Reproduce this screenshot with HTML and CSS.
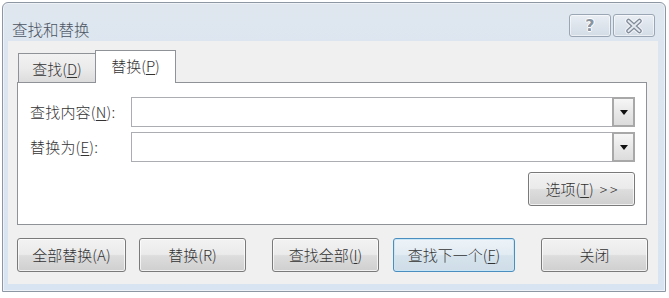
FILE: index.html
```html
<!DOCTYPE html>
<html lang="zh-CN">
<head>
<meta charset="utf-8">
<title>查找和替换</title>
<link rel="stylesheet" href="styles.css">
</head>
<body>
<div class="window">
  <div class="titlebar">
    <span class="title">查找和替换</span>
    <div class="caption-btns">
      <div class="cap-btn help"><span class="help-glyph">?</span></div>
      <div class="cap-btn close">
        <svg width="18" height="16" viewBox="0 0 18 16">
          <path d="M3.5 3 L14.5 13 M14.5 3 L3.5 13" stroke="#f4f6f8" stroke-width="6.5" stroke-linecap="round"/>
          <path d="M3.5 3 L14.5 13 M14.5 3 L3.5 13" stroke="#808b99" stroke-width="4.5" stroke-linecap="round"/>
          <path d="M3.5 3 L14.5 13 M14.5 3 L3.5 13" stroke="#e4e9ef" stroke-width="2" stroke-linecap="round"/>
        </svg>
      </div>
    </div>
  </div>
  <div class="client">
    <div class="tabs">
      <div class="tab">查找(<u>D</u>)</div>
      <div class="tab active">替换(<u>P</u>)</div>
    </div>
    <div class="panel">
      <div class="row">
        <span class="label">查找内容(<u>N</u>):</span>
        <div class="combo">
          <div class="combo-input"></div>
          <div class="combo-btn"><svg width="8" height="5" viewBox="0 0 8 5"><path d="M0 0 H8 L4 5 Z" fill="#111"/></svg></div>
        </div>
      </div>
      <div class="row">
        <span class="label">替换为(<u>E</u>):</span>
        <div class="combo">
          <div class="combo-input"></div>
          <div class="combo-btn"><svg width="8" height="5" viewBox="0 0 8 5"><path d="M0 0 H8 L4 5 Z" fill="#111"/></svg></div>
        </div>
      </div>
      <div class="options-row">
        <div class="btn options">选项(<u>T</u>)<span class="arrows">&gt;&gt;</span></div>
      </div>
    </div>
    <div class="actions">
      <div class="btn b-all">全部替换(A)</div>
      <div class="btn b-rep">替换(R)</div>
      <div class="btn b-findall">查找全部(<u>I</u>)</div>
      <div class="btn b-next focused">查找下一个(<u>F</u>)</div>
      <div class="btn b-close">关闭</div>
    </div>
  </div>
</div>
</body>
</html>
```

FILE: styles.css
```css
* { box-sizing: border-box; }

html, body {
  margin: 0;
  padding: 0;
  background: #ffffff;
}

body {
  font-family: "Noto Sans CJK SC", "Noto Sans", "Liberation Sans", sans-serif;
  font-weight: 300;
  color: #333333;
  width: 669px;
  height: 298px;
  overflow: hidden;
}

u { text-decoration: underline; text-underline-offset: 2px; text-decoration-thickness: 1px; }

.window {
  margin: 2px 0 0 2px;
  width: 664px;
  height: 290px;
  border: 1px solid #8d97a3;
  border-radius: 6px 6px 0 0;
  background: linear-gradient(#dfe6ee, #dde6f0 40px, #d8e4f1);
  box-shadow: inset 0 0 0 1px rgba(255,255,255,0.5);
}

.titlebar {
  height: 38px;
  display: flex;
  align-items: flex-start;
  justify-content: space-between;
}

.title {
  margin: 17px 0 0 9px;
  font-size: 15.5px;
  line-height: 18px;
  color: #4b5462;
}

.caption-btns {
  display: flex;
  gap: 2px;
  margin: 11px 10px 0 0;
}

.cap-btn {
  width: 42px;
  height: 23px;
  border: 1px solid #9aa6b3;
  border-radius: 3px;
  background: linear-gradient(#e9eef4, #dde4ec 50%, #d3dce6);
  box-shadow: inset 0 0 0 1px rgba(255,255,255,0.55);
  display: flex;
  align-items: center;
  justify-content: center;
}

.help-glyph {
  font-family: "DejaVu Sans", sans-serif;
  font-weight: bold;
  font-size: 16px;
  line-height: 16px;
  color: #8994a1;
  text-shadow: 1px 0 #fff, -1px 0 #fff, 0 1px #fff, 0 -1px #fff;
}

.client {
  margin-left: 5px;
  width: 650px;
  height: 243px;
  background: #f0f0f0;
  padding: 9px 0 0 9px;
}

.tabs {
  display: flex;
  align-items: flex-end;
  height: 32px;
}

.tab {
  font-size: 15px;
  line-height: 20px;
  display: flex;
  align-items: center;
  justify-content: center;
}

.tab:first-child {
  margin-left: 1px;
  width: 77px;
  height: 29px;
  border: 1px solid #8f9296;
  border-bottom: none;
  border-right: none;
  background: linear-gradient(#f2f2f2, #ebebeb 50%, #dcdcdc);
  padding-top: 2px;
}

.tab.active {
  width: 81px;
  height: 33px;
  margin-bottom: -1px;
  border: 1px solid #8f9296;
  border-bottom: none;
  background: #ffffff;
  position: relative;
  z-index: 1;
  padding-bottom: 3px;
}

.panel {
  width: 630px;
  height: 143px;
  border: 1px solid #8f9296;
  background: #ffffff;
  padding: 14px 11px 0 12px;
}

.row {
  display: flex;
  align-items: center;
  height: 30px;
  margin-bottom: 5px;
}

.label {
  width: 101px;
  font-size: 15px;
  line-height: 20px;
  white-space: nowrap;
  letter-spacing: 0.2px;
}

.combo {
  width: 504px;
  height: 30px;
  display: flex;
  border: 1px solid #abadb3;
  border-right: none;
  background: #fff;
}

.combo-input {
  flex: 1;
}

.combo-btn {
  width: 23px;
  height: 30px;
  margin-top: -1px;
  border: 2px solid #a8a8a8;
  background: linear-gradient(#f6f6f6, #e8e8e8 50%, #dcdcdc);
  display: flex;
  align-items: center;
  justify-content: center;
}

.options-row {
  display: flex;
  justify-content: flex-end;
  margin-top: 10px;
}

.btn {
  height: 34px;
  border: 1px solid #7a7a7a;
  border-radius: 3px;
  background: linear-gradient(#f2f2f2, #ebebeb 48%, #dddddd 52%, #cfcfcf);
  box-shadow: inset 0 0 0 1px rgba(255,255,255,0.7);
  font-size: 15px;
  line-height: 20px;
  display: flex;
  align-items: center;
  justify-content: center;
  white-space: nowrap;
  color: #333333;
}

.options {
  width: 107px;
}

.arrows {
  margin-left: 6px;
  letter-spacing: 3px;
  font-size: 14px;
  margin-right: -3px;
}

.actions {
  display: flex;
  margin-top: 13px;
}

.b-all { width: 109px; }
.b-rep { width: 107px; margin-left: 13px; }
.b-findall { width: 107px; margin-left: 26px; }
.b-next { width: 122px; margin-left: 14px; }
.b-close { width: 107px; margin-left: 26px; }

.btn.focused {
  border-color: #4a8dbf;
  background: linear-gradient(#edf3f8, #e3ecf3 48%, #d6e3ed 52%, #cfdde8);
  box-shadow: inset 0 0 0 1px #c9e6f7;
}
```
